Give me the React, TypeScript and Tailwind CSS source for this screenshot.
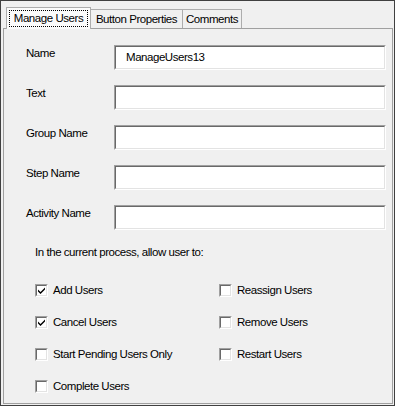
import React from "react";

function Field({ label, value }: { label: string; value?: string }) {
  return (
    <div className="flex items-start h-[25px]">
      <div className="w-[88px] mt-[2px] leading-[13px]">{label}</div>
      <div className="w-[272px] h-[25px] border border-t-[#a0a0a0] border-l-[#a0a0a0] border-b-white border-r-white">
        <div className="w-full h-full bg-white border border-t-[#696969] border-l-[#696969] border-b-[#e3e3e3] border-r-[#e3e3e3] flex items-center pl-[10px] leading-[13px]">
          {value}
        </div>
      </div>
    </div>
  );
}

function Check({ label, checked }: { label: string; checked?: boolean }) {
  return (
    <div className="flex items-center h-[13px]">
      <div className="w-[13px] h-[13px] border border-t-[#a0a0a0] border-l-[#a0a0a0] border-b-white border-r-white shrink-0">
        <div className="w-full h-full bg-white border border-t-[#696969] border-l-[#696969] border-b-[#e3e3e3] border-r-[#e3e3e3]">
          {checked && (
            <svg width="9" height="9" viewBox="0 0 9 9" className="block">
              <path d="M1 3.5 L3.5 6 L8 1.5 L8 3.5 L3.5 8 L1 5.5 Z" fill="#000" />
            </svg>
          )}
        </div>
      </div>
      <span className="ml-[5px] leading-[13px] whitespace-nowrap">{label}</span>
    </div>
  );
}

export default function App() {
  return (
    <div className="w-[395px] h-[406px] bg-[#f0f0f0] border border-[#404040] flex flex-col font-['Liberation_Sans',Arial,sans-serif] text-[11.5px] text-black tracking-[-0.45px] overflow-hidden">
      <div className="flex items-end h-[27px] pl-[5px] shrink-0">
        <div className="relative z-10 -mb-px h-[22px] w-[85px] bg-[#fbfbfb] border border-b-0 border-[#adadad] flex items-center justify-center">
          <div className="border border-dotted border-black px-[4px] h-[17px] flex items-center leading-[13px]">Manage Users</div>
        </div>
        <div className="h-[19px] w-[92px] border border-b-0 border-l-0 border-[#adadad] flex items-center justify-center leading-[13px]">
          Button Properties
        </div>
        <div className="h-[19px] w-[59px] border border-b-0 border-l-0 border-[#adadad] flex items-center justify-center leading-[13px]">
          Comments
        </div>
      </div>
      <div className="flex-1 ml-[2px] mr-[1px] mb-[1px] border border-[#a0a0a0] flex flex-col pl-[22px] pt-[16px]">
        <div className="flex flex-col gap-[15px]">
          <Field label="Name" value="ManageUsers13" />
          <Field label="Text" />
          <Field label="Group Name" />
          <Field label="Step Name" />
          <Field label="Activity Name" />
        </div>
        <div className="mt-[16px] ml-[9px] leading-[13px]">In the current process, allow user to:</div>
        <div className="mt-[25px] ml-[9px] grid grid-cols-[184px_1fr] gap-y-[19px]">
          <Check label="Add Users" checked />
          <Check label="Reassign Users" />
          <Check label="Cancel Users" checked />
          <Check label="Remove Users" />
          <Check label="Start Pending Users Only" />
          <Check label="Restart Users" />
          <Check label="Complete Users" />
        </div>
      </div>
    </div>
  );
}
